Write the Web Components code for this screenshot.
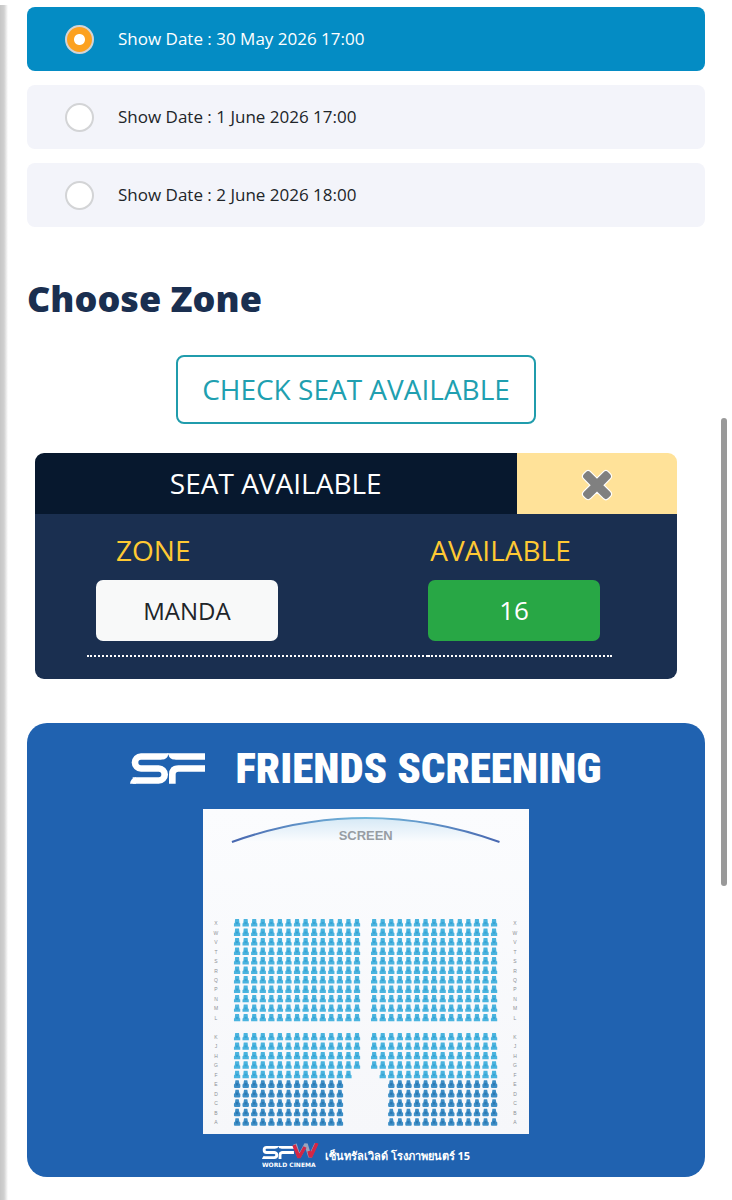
<!DOCTYPE html>
<html lang="en">
<head>
<meta charset="utf-8">
<meta name="viewport" content="width=device-width, initial-scale=1">
<title>Choose Zone</title>
<style>
    body {
        margin: 0;
        background: #fff;
        color: #212529;
        font-family: "Open Sans", "Noto Sans", sans-serif;
    }
</style>
</head>
<body>
<booking-page>
    <show-dates></show-dates>
    <zone-section heading="Choose Zone">
        <check-button>CHECK SEAT AVAILABLE</check-button>
        <seat-available></seat-available>
    </zone-section>
    <zone-poster>
        <span slot="title">FRIENDS SCREENING</span>
        <seat-map></seat-map>
        <span slot="place" lang="th">เซ็นทรัลเวิลด์ โรงภาพยนตร์ 15</span>
    </zone-poster>
</booking-page>

<script>
class BookingPage extends HTMLElement {

    constructor() {
        super();
        this.shadowDOM = this.attachShadow({mode: "open"});
        this.shadowDOM.innerHTML = `
            <style>
                :host {
                    display: block;
                    box-sizing: border-box;
                    min-height: 100vh;
                    padding: 7px 27px 23px;
                }
                /* shadow of the page behind */
                .edge {
                    position: fixed;
                    left: 0;
                    top: 5px;
                    bottom: 0;
                    width: 8px;
                    background: linear-gradient(to right, #c6c6c6, #d0d0d0 50%, #fff);
                }
                .thumb {
                    position: fixed;
                    right: 5px;
                    top: 418px;
                    width: 6px;
                    height: 39%;
                    border-radius: 3px;
                    background: #999;
                }
            </style>
            <div class="edge"></div>
            <slot></slot>
            <div class="thumb"></div>`;
    }
}

class ShowDates extends HTMLElement {

    constructor() {
        super();
        this.shadowDOM = this.attachShadow({mode: "open"});
        this._dates = ["30 May 2026 17:00", "1 June 2026 17:00", "2 June 2026 18:00"];
        this.render();
    }

    render() {
        this.shadowDOM.innerHTML = `
            <style>
                :host {
                    display: flex;
                    flex-direction: column;
                    gap: 14px;
                }
                label {
                    display: flex;
                    align-items: center;
                    gap: 24px;
                    min-height: 64px;
                    padding-left: 38px;
                    border-radius: 8px;
                    background: #f3f4fa;
                    font-size: 17px;
                    line-height: 24px;
                }
                label:has(:checked) {
                    background: #048cc4;
                    color: #fff;
                }
                input {
                    appearance: none;
                    box-sizing: border-box;
                    width: 29px;
                    height: 29px;
                    margin: 0;
                    border: 2px solid #d3d4d6;
                    border-radius: 50%;
                    background: #fff;
                }
                input:checked {
                    background: radial-gradient(circle, #fff 5px, #fca120 6px);
                }
            </style>
            ${this._dates.map((date, i) => `
            <label>
                <input type="radio" name="show" ${i === 0 ? "checked" : ""}>
                <span>Show Date : ${date}</span>
            </label>`).join("")}`;
    }
}

class ZoneSection extends HTMLElement {

    constructor() {
        super();
        this.shadowDOM = this.attachShadow({mode: "open"});
    }

    connectedCallback() {
        this.shadowDOM.innerHTML = `
            <style>
                :host {
                    display: block;
                    margin-top: 48px;
                }
                h2 {
                    margin: 0 0 32px;
                    color: #1a2f50;
                    font-size: 36px;
                    font-weight: 800;
                    line-height: 48px;
                }
                .content {
                    display: flex;
                    flex-direction: column;
                    align-items: center;
                    gap: 29px;
                    margin: 0 28px 0 8px;
                }
            </style>
            <h2>${this.getAttribute("heading")}</h2>
            <div class="content"><slot></slot></div>`;
    }
}

class CheckButton extends HTMLElement {

    constructor() {
        super();
        this.shadowDOM = this.attachShadow({mode: "open"});
        this.shadowDOM.innerHTML = `
            <style>
                :host {
                    display: block;
                }
                button {
                    padding: 12px 24px;
                    border: 2px solid #209cac;
                    border-radius: 8px;
                    background: #fff;
                    color: #209fb0;
                    font: inherit;
                    font-size: 28px;
                    font-weight: 500;
                    line-height: 41px;
                }
            </style>
            <button type="button"><slot></slot></button>`;
    }
}

class SeatAvailable extends HTMLElement {

    constructor() {
        super();
        this.shadowDOM = this.attachShadow({mode: "open"});
        this._zones = [{name: "MANDA", seats: 16}];
        this.render();
    }

    render() {
        this.shadowDOM.innerHTML = `
            <style>
                :host {
                    display: block;
                    align-self: stretch;
                    overflow: hidden;
                    border-radius: 9px;
                    font-size: 28px;
                    font-weight: 500;
                    line-height: 41px;
                }
                header {
                    display: grid;
                    grid-template-columns: 3fr 1fr;
                    text-align: center;
                }
                h3 {
                    margin: 0;
                    padding: 10px 0;
                    background: #07182e;
                    color: #fff;
                    font-size: inherit;
                    font-weight: inherit;
                }
                button {
                    border: 0;
                    font: inherit;
                }
                .close {
                    display: grid;
                    place-items: center;
                    background: #ffe299;
                }
                .zones {
                    padding: 0 65px 22px 52px;
                    background: #1a2f50;
                }
                table {
                    width: 100%;
                    border-collapse: collapse;
                    table-layout: fixed;
                }
                th, td {
                    box-sizing: border-box;
                }
                th {
                    padding: 16px 0 9px 29px;
                    color: #ffc933;
                    font-weight: inherit;
                    text-align: left;
                }
                th + th {
                    padding-left: 2px;
                }
                th:first-child {
                    width: 65%;
                }
                td {
                    padding: 0 12px 14px 0;
                }
                tbody tr {
                    border-bottom: 2px dotted #fff;
                }
                td:first-child {
                    padding-left: 9px;
                }
                td button {
                    display: block;
                    width: 100%;
                    padding: 10px 0;
                    border-radius: 7px;
                }
                td .zone {
                    width: 182px;
                    background: #f8f9f9;
                    color: #212529;
                    font-size: 24px;
                }
                td .seats {
                    background: #28a745;
                    color: #fff;
                    font-size: 26px;
                }
            </style>
            <header>
                <h3>SEAT AVAILABLE</h3>
                <button class="close" type="button" aria-label="Close">
                    <svg width="36" height="36" viewBox="0 0 32 32">
                        <path d="M16 11.400 21.900 5.500q2-2 4 0l1.600 1.600q2 2 0 4L21.600 17l5.900 5.900q2 2 0 4l-1.600 1.600q-2 2-4 0L16 22.600l-5.900 5.900q-2 2-4 0l-1.600-1.600q-2-2 0-4l5.900-5.900-5.900-5.900q-2-2 0-4l1.600-1.600q2-2 4 0Z" fill="#808080" stroke="#fff" stroke-width="2" paint-order="stroke"/>
                    </svg>
                </button>
            </header>
            <div class="zones">
                <table>
                    <thead>
                        <tr><th scope="col">ZONE</th><th scope="col">AVAILABLE</th></tr>
                    </thead>
                    <tbody>
                        ${this._zones.map(zone => `
                        <tr>
                            <td><button class="zone" type="button">${zone.name}</button></td>
                            <td><button class="seats" type="button">${zone.seats}</button></td>
                        </tr>`).join("")}
                    </tbody>
                </table>
            </div>`;
    }
}

class ZonePoster extends HTMLElement {

    constructor() {
        super();
        this.shadowDOM = this.attachShadow({mode: "open"});
        this.render();
    }

    render() {
        const mark = `
            <g fill="none" stroke="#fff" stroke-width="20">
                <path d="M115 10H33a18 18 0 0 0 0 36H86a18 18 0 0 1 0 36H8"/>
                <path d="M112 10H225M225 46H145Q127 46 127 64V92"/>
            </g>
            <path d="M0 92Q1 76 18 72V92Z" fill="#fff"/>
            <path d="M115 3Q118 19 136 20V36Q119 37 116 56Q112 37 94 36V20Q112 19 115 3Z" fill="#2062b0"/>`;

        this.shadowDOM.innerHTML = `
            <style>
                :host {
                    display: flex;
                    flex-direction: column;
                    align-items: center;
                    margin-top: 44px;
                    padding: 20px 0 8px;
                    border-radius: 20px;
                    background: #2062b0;
                    color: #fff;
                }
                header {
                    display: flex;
                    align-items: center;
                    gap: 30px;
                    margin-bottom: 16px;
                }
                h3 {
                    margin: 0;
                    font-family: "Roboto Condensed", Roboto, sans-serif;
                    font-size: 43px;
                    font-weight: 900;
                    line-height: 50px;
                }
                footer {
                    display: flex;
                    align-items: center;
                    gap: 6px;
                    margin-top: 9px;
                    font-size: 11px;
                    font-weight: 700;
                    line-height: 26px;
                }
            </style>
            <header>
                <svg width="75" height="31" viewBox="0 0 225 92" role="img" aria-label="SF">${mark}</svg>
                <h3><slot name="title"></slot></h3>
            </header>
            <slot></slot>
            <footer>
                <svg width="57" height="26" viewBox="0 0 57 26" role="img" aria-label="SFW World Cinema">
                    <g transform="translate(0 3) scale(.142)">${mark}</g>
                    <g fill="none" stroke-width="3.500" stroke-linejoin="bevel">
                        <path d="M33 1 37 14 44 1 48 14 54 1" stroke="#9aa4bd"/>
                        <path d="M32 2 37 14.500 43 4M47 8 48.500 14 55 0" stroke="#d32645"/>
                    </g>
                    <text x="0" y="24" fill="#fff" font-family="DejaVu Sans, sans-serif" font-size="6" font-weight="700">WORLD CINEMA</text>
                </svg>
                <slot name="place"></slot>
            </footer>`;
    }
}

class SeatMap extends HTMLElement {

    constructor() {
        super();
        this.shadowDOM = this.attachShadow({mode: "open"});
        this.render();
    }

    // missing = seats left out on each side of the aisle
    row(letter, y, missing, kind) {
        let seats = "";
        for (let i = 0; i < 15 - missing; i++) {
            seats += `<use href="#${kind}" x="${31 + i * 8.58}" y="${y}"/>`;
            seats += `<use href="#${kind}" x="${168.3 + (i + missing) * 8.58}" y="${y}"/>`;
        }
        return `
            <text x="13" y="${y + 6}">${letter}</text>${seats}
            <text x="312.500" y="${y + 6}">${letter}</text>`;
    }

    render() {
        const back = [..."XWVTSRQPNML"].map((letter, i) => this.row(letter, 110.3 + i * 9.5, 0, "seat"));
        const front = [..."KJHGFEDCBA"].map((letter, i) => {
            const missing = i < 4 ? 0 : i === 4 ? 1 : 2;
            return this.row(letter, 224.3 + i * 9.5, missing, i > 4 ? "premium" : "seat");
        });

        this.shadowDOM.innerHTML = `
            <style>
                :host {
                    display: block;
                    width: 48%;
                }
                svg {
                    display: block;
                    width: 100%;
                    background: linear-gradient(#fbfcfe, #f6f7fa);
                }
                text {
                    font: 5px "Liberation Sans", sans-serif;
                    fill: #8d9196;
                    text-anchor: middle;
                }
                .screen {
                    font-size: 13px;
                    font-weight: 700;
                    fill: #979da3;
                }
            </style>
            <svg viewBox="0 0 326 326">
                <defs>
                    <linearGradient id="line">
                        <stop offset="0" stop-color="#4867b0"/>
                        <stop offset=".5" stop-color="#74b9dc"/>
                        <stop offset="1" stop-color="#4867b0"/>
                    </linearGradient>
                    <linearGradient id="glow" x2="0" y2="1">
                        <stop offset="0" stop-color="#d6e9f6"/>
                        <stop offset="1" stop-color="#fbfcfe"/>
                    </linearGradient>
                    <g id="seat">
                        <path d="M1.200 0h3.900l.4 4 .8 .5v2.900H0V4.500l.8-.5Z" fill="#4ab4df"/>
                        <path d="M2 3h2.300v2H2Z" fill="#38a3d3"/>
                    </g>
                    <g id="premium">
                        <path d="M1.500 0h3.300l.6 3.200 1 1v2.700l-.8 .7H.8l-.8-.7V4.200l1-1Z" fill="#3d8ec6"/>
                        <path d="M2 2.800h2.300v2.500H2Z" fill="#2b78b2"/>
                    </g>
                </defs>
                <path d="M29 33Q163-15 297 33Z" fill="url(#glow)"/>
                <path d="M29 33Q163-15 297 33" fill="none" stroke="url(#line)" stroke-width="2"/>
                <text class="screen" x="163" y="31">SCREEN</text>
                ${back.join("")}
                ${front.join("")}
            </svg>`;
    }
}

customElements.define("booking-page", BookingPage);
customElements.define("show-dates", ShowDates);
customElements.define("zone-section", ZoneSection);
customElements.define("check-button", CheckButton);
customElements.define("seat-available", SeatAvailable);
customElements.define("zone-poster", ZonePoster);
customElements.define("seat-map", SeatMap);
</script>
</body>
</html>
